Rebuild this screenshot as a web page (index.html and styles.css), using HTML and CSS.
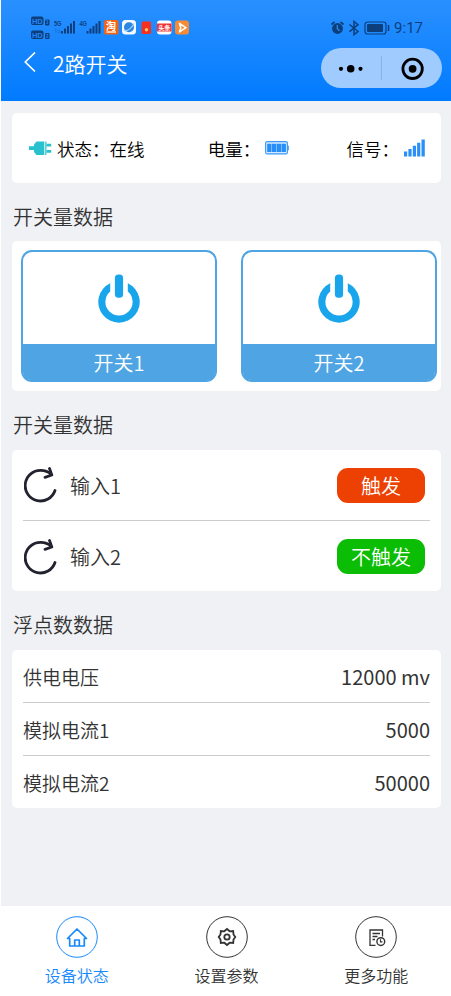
FILE: index.html
```html
<!DOCTYPE html>
<html lang="zh-CN">
<head>
    <meta charset="UTF-8">
    <meta name="viewport" content="width=device-width, initial-scale=1.0">
    <title>2路开关</title>
    <link rel="stylesheet" href="styles.css">
</head>
<body>

<div class="page">
    <header class="header">
        <div class="status-bar">
            <svg class="status-left" width="160" height="26" viewBox="0 0 160 26">
                <!-- HD badges -->
                <g fill="#0c3f7c">
                    <rect x="1" y="1.500" width="12.5" height="8.5" rx="2"/>
                    <rect x="1" y="15.500" width="12.5" height="8.5" rx="2"/>
                    <rect x="15" y="4.500" width="4.5" height="6" rx="1"/>
                    <rect x="15" y="18" width="4.5" height="6" rx="1"/>
                </g>
                <g class="hd-text">
                    <text x="1.900" y="8.600">HD</text>
                    <text x="1.900" y="22.600">HD</text>
                </g>
                <g class="sim-text">
                    <text x="15.8" y="9.400">1</text>
                    <text x="15.8" y="23">2</text>
                </g>
                <g class="net-text">
                    <text x="24" y="11" textLength="7.500" lengthAdjust="spacingAndGlyphs">5G</text>
                    <text x="49.5" y="11" textLength="7.500" lengthAdjust="spacingAndGlyphs">4G</text>
                </g>
                <path d="M26 14v4m-1.300-3l1.300-1.200M29 14v4m0 0l1.300-1.200" stroke="#1766bd" stroke-width=".7" fill="none"/>
                <g fill="#0c3f7c">
                    <rect x="31" y="16" width="2" height="2.500"/>
                    <rect x="34" y="13.500" width="2" height="5"/>
                    <rect x="37" y="11" width="2" height="7.500"/>
                    <rect x="40" y="8.500" width="2" height="10"/>
                    <rect x="43" y="6" width="2" height="12.500"/>
                    <rect x="56.500" y="16" width="2" height="2.500"/>
                    <rect x="59.500" y="13.500" width="2" height="5"/>
                    <rect x="62.500" y="11" width="2" height="7.500"/>
                    <rect x="65.500" y="8.500" width="2" height="10"/>
                    <rect x="68.500" y="6" width="2" height="12.500"/>
                </g>
                <!-- app icons -->
                <rect x="74" y="5" width="14.500" height="14.500" rx="2" fill="#f26415"/>
                <text class="app-text" x="76" y="14.500" font-size="10">淘</text>
                <rect x="76.500" y="16" width="9.500" height="2" fill="#fbc9a8"/>
                <rect x="92" y="5" width="14" height="14.500" rx="3.500" fill="#f4faff"/>
                <circle cx="99" cy="12.200" r="5" fill="#2e86e0"/>
                <path d="M94 15.500c4 1 8-3 10-7" fill="none" stroke="#9fd0fa" stroke-width="1.200"/>
                <rect x="111.500" y="6.500" width="9.500" height="12.500" rx="1.500" fill="#f5301f"/>
                <circle cx="116.500" cy="14.700" r="1.700" fill="#ffc46b"/>
                <rect x="127" y="5.500" width="14.500" height="14" rx="3" fill="#fff"/>
                <rect x="127" y="8.500" width="14.500" height="8" fill="#ee3437"/>
                <text class="app-text" x="128.200" y="14.900" font-size="6.200">头条</text>
                <rect x="145" y="5.500" width="14" height="14" rx="3" fill="#f78b35"/>
                <path d="M149.500 8.500l6.500 4.200-6.500 4.200 1.300-4.200z" fill="none" stroke="#fff" stroke-width="1.500" stroke-linejoin="round"/>
            </svg>
            <div class="status-right">
                <svg width="60" height="16" viewBox="0 0 60 16">
                    <circle cx="7.500" cy="8.500" r="5.400" fill="#0c3f7c"/>
                    <path d="M1.500 4.500l3-2.500M13.500 4.500l-3-2.500" stroke="#0c3f7c" stroke-width="1.700"/>
                    <path d="M7.300 5v3.700l2.200 2" fill="none" stroke="#2b8cfa" stroke-width="1.200"/>
                    <path d="M19.500 4.500l8.500 7-4 3.200v-13.200l4 3.200-8.500 7" fill="none" stroke="#0c3f7c" stroke-width="1.500"/>
                    <rect x="35" y="2" width="21" height="12" rx="2.500" fill="none" stroke="#0c3f7c" stroke-width="1.200"/>
                    <rect x="37" y="4" width="16" height="8" rx="1" fill="#0c3f7c"/>
                    <rect x="57.800" y="5" width="1.500" height="6" fill="#0c3f7c"/>
                </svg>
                <span class="time">9:17</span>
            </div>
        </div>
        <div class="nav-bar">
            <svg class="back" width="14" height="22" viewBox="0 0 14 22">
                <path d="M12 1.500L2.300 11l9.700 9.500" fill="none" stroke="#fff" stroke-width="1.700"/>
            </svg>
            <h1 class="nav-title">2路开关</h1>
            <div class="capsule">
                <svg width="60" height="39" viewBox="0 0 60 39">
                    <circle cx="20" cy="19.800" r="2.100"/>
                    <circle cx="29.700" cy="19.800" r="3.800"/>
                    <circle cx="39.500" cy="19.800" r="2.100"/>
                </svg>
                <span class="capsule-line"></span>
                <svg width="60" height="39" viewBox="0 0 60 39">
                    <circle cx="30.600" cy="19.800" r="9.700" fill="none" stroke="#000" stroke-width="2.800"/>
                    <circle cx="30.600" cy="19.800" r="3.900"/>
                </svg>
            </div>
        </div>
    </header>

    <main class="content">
        <div class="card info">
            <div class="info-item">
                <svg class="plug" width="23" height="16" viewBox="0 0 23 16">
                    <path d="M0 6.200H5V4.500L7.500 1.500H15.200v13.500H7.500L5 12V10H0z" fill="#2ac1cf"/>
                    <rect x="15.800" y="1.500" width="1.800" height="13.500" fill="#5fd0da"/>
                    <path d="M17.500 3.800h4.700v2.600h-4.700zM17.500 10.100h4.700v2.600h-4.700z" fill="#2ac1cf"/>
                </svg>
                <span>状态：在线</span>
            </div>
            <div class="info-item battery-item">
                <span>电量：</span>
                <svg class="battery" width="24" height="14" viewBox="0 0 24 14">
                    <rect x=".6" y=".6" width="21.800" height="12.300" rx="1.500" fill="#d4eafe" stroke="#3d98f7" stroke-width="1.100"/>
                    <path d="M2.200 2.800h4.300v8.200H2.200zM7 2.800h4.300v8.200H7zM11.800 2.800h4.300v8.200h-4.300zM16.600 2.800h4.300v8.200h-4.300z" fill="#278df9"/>
                    <rect x="22.300" y="4.500" width="1.500" height="5" rx=".7" fill="#3d98f7"/>
                </svg>
            </div>
            <div class="info-item">
                <span>信号：</span>
                <svg class="signal" width="22" height="18" viewBox="0 0 22 18">
                    <path d="M0 12.500h3.200v5H0zM4.400 10h3.200v7.500H4.400zM8.800 6.800H12v10.700H8.800zM13.100 3.800h3.200v13.700h-3.200zM17.500.5h3.300v17h-3.300z" fill="#2b8ff8"/>
                </svg>
            </div>
        </div>

        <h2 class="section-title">开关量数据</h2>
        <div class="card switches">
            <div class="switch">
                <svg class="power" width="42" height="50" viewBox="0 0 42 50">
                    <path d="M12.200 9.200A20.700 20.700 0 1 0 29.800 9.200V17.600A13.600 13.600 0 1 1 12.200 17.600z" fill="#18a5eb"/>
                    <rect x="16.900" y=".6" width="8.200" height="23.200" rx="3.600" fill="#18a5eb"/>
                </svg>
                <div class="switch-name">开关1</div>
            </div>
            <div class="switch">
                <svg class="power" width="42" height="50" viewBox="0 0 42 50">
                    <path d="M12.200 9.200A20.700 20.700 0 1 0 29.800 9.200V17.600A13.600 13.600 0 1 1 12.200 17.600z" fill="#18a5eb"/>
                    <rect x="16.900" y=".6" width="8.200" height="23.200" rx="3.600" fill="#18a5eb"/>
                </svg>
                <div class="switch-name">开关2</div>
            </div>
        </div>

        <h2 class="section-title">开关量数据</h2>
        <div class="card inputs">
            <div class="input-row">
                <svg class="reload" width="34" height="36" viewBox="0 0 34 36">
                    <path d="M27.300 7.300C24 4.400 20.500 3.400 16.800 3.400A15.300 15.300 0 1 0 31 23.500M25.500 1.500l2.300 6.500-6.800 2.300" fill="none" stroke="#23232f" stroke-width="2.800" stroke-linecap="round" stroke-linejoin="round"/>
                </svg>
                <span>输入1</span>
                <span class="badge badge-on">触发</span>
            </div>
            <div class="input-row">
                <svg class="reload" width="34" height="36" viewBox="0 0 34 36">
                    <path d="M27.300 7.300C24 4.400 20.500 3.400 16.800 3.400A15.300 15.300 0 1 0 31 23.500M25.500 1.500l2.300 6.500-6.800 2.300" fill="none" stroke="#23232f" stroke-width="2.800" stroke-linecap="round" stroke-linejoin="round"/>
                </svg>
                <span>输入2</span>
                <span class="badge badge-off">不触发</span>
            </div>
        </div>

        <h2 class="section-title">浮点数数据</h2>
        <div class="card floats">
            <div class="float-row">
                <span>供电电压</span>
                <span class="value">12000 mv</span>
            </div>
            <div class="float-row">
                <span>模拟电流1</span>
                <span class="value">5000</span>
            </div>
            <div class="float-row">
                <span>模拟电流2</span>
                <span class="value">50000</span>
            </div>
        </div>
    </main>

    <nav class="tab-bar">
        <div class="tab active">
            <svg width="42" height="42" viewBox="0 0 42 42" fill="none" stroke="currentColor">
                <circle cx="21" cy="21" r="20.300" stroke-width="1"/>
                <path d="M11.500 22.500L21 13l9.500 9.500h-2.200V30H13.700v-7.500zM18.700 30v-6h4.600v6" stroke-width="1.700" stroke-linejoin="round"/>
            </svg>
            <span>设备状态</span>
        </div>
        <div class="tab">
            <svg width="42" height="42" viewBox="0 0 42 42" fill="none" stroke="currentColor">
                <circle cx="21" cy="21" r="20.300" stroke-width="1"/>
                <path class="gear" d="M21 13l2.700 2.300 3.500-.3.300 3.500 1.800 2.500-1.800 2.500-.3 3.500-3.500-.3-2.700 2.300-2.700-2.300-3.500.3-.3-3.500-1.800-2.500 1.800-2.500.3-3.500 3.500.3z" stroke-width="1.800"/>
                <circle cx="21" cy="21" r="2.700" stroke-width="1.800"/>
            </svg>
            <span>设置参数</span>
        </div>
        <div class="tab">
            <svg width="42" height="42" viewBox="0 0 42 42" fill="none" stroke="currentColor">
                <circle cx="21" cy="21" r="20.300" stroke-width="1"/>
                <path d="M20.500 29.300h-5.500V14h12.500v6.500M17.500 17.500h7.500M17.500 20.500h5M17.500 23.500h2.500" stroke-width="1.300"/>
                <circle cx="25.800" cy="25.600" r="3.900" stroke-width="1.400"/>
                <path d="M25.500 23.300v2.600h2" stroke-width="1.100"/>
            </svg>
            <span>更多功能</span>
        </div>
    </nav>
</div>

</body>
</html>
```

FILE: styles.css
```css
* {
    box-sizing: border-box;
}
body {
    margin: 0;
    background-color: #fff;
    font-family: "Noto Sans CJK SC", sans-serif;
    font-weight: 350;
    color: #333;
}
svg {
    display: block;
    flex-shrink: 0;
}
.page {
    display: flex;
    flex-direction: column;
    height: 996px;
    margin-left: 1px;
    background-color: #eff1f5;
}

/* header */
.header {
    height: 101px;
    padding-top: 15px;
    background: linear-gradient(#2a90ff, #017bff);
}
.status-bar {
    display: flex;
    justify-content: space-between;
    height: 26px;
    padding: 0 28px 0 29px;
}
.hd-text {
    font: bold 7.5px "Liberation Sans", sans-serif;
    fill: #2485f4;
}
.sim-text {
    font: bold 5px "Liberation Sans", sans-serif;
    fill: #2485f4;
}
.net-text {
    font: bold 7px "Liberation Sans", sans-serif;
    fill: #0c3f7c;
}
.app-text {
    font-weight: bold;
    fill: #fff;
}
.status-right {
    display: flex;
    gap: 4px;
    height: 16px;
    margin-top: 5px;
    align-items: center;
}
.time {
    font: 15px Roboto, sans-serif;
    color: #0c3f7c;
}
.nav-bar {
    display: flex;
    align-items: center;
    height: 42px;
    padding: 0 9px 0 22px;
}
.nav-title {
    margin: 2px 0 0 16px;
    font-size: 21px;
    font-weight: 350;
    line-height: 30px;
    color: #fff;
}
.capsule {
    display: flex;
    align-items: center;
    width: 121px;
    height: 40px;
    margin: 12px 0 0 auto;
    border-radius: 20px;
    background-color: #a0cbff;
}
.capsule-line {
    width: 1px;
    height: 24px;
    background-color: #80b3ee;
}

/* cards */
.content {
    flex: 1;
    padding: 12px 10px 0 11px;
}
.card {
    border-radius: 5px;
    background-color: #fff;
}
.section-title {
    height: 59px;
    margin: 0;
    padding: 5px 0 0 1px;
    font-size: 20px;
    font-weight: 350;
    line-height: 58px;
}
.info + .section-title {
    height: 58px;
}
.info {
    display: flex;
    justify-content: space-between;
    align-items: center;
    height: 70px;
    padding: 0 15px 0 17px;
    font-size: 17.5px;
    color: #000;
}
.info-item {
    display: flex;
    align-items: center;
}
.battery-item {
    padding-left: 6px;
}
.plug {
    margin-right: 5px;
}
.battery, .signal {
    margin-left: 5px;
}

/* switch buttons */
.switches {
    display: flex;
    justify-content: space-between;
    height: 150px;
    padding: 9px 4px 9px 9px;
}
.switch {
    display: flex;
    flex-direction: column;
    justify-content: space-between;
    align-items: center;
    width: 196px;
    border: 2px solid #4fa5e4;
    border-radius: 11px;
}
.power {
    margin-top: 22px;
}
.switch-name {
    width: 100%;
    height: 36px;
    border-radius: 0 0 8px 8px;
    background-color: #4fa5e4;
    font-size: 20px;
    line-height: 37px;
    text-align: center;
    color: #fff;
}

/* input rows */
.inputs {
    height: 141px;
    padding: 0 11px;
}
.input-row {
    display: flex;
    align-items: center;
    height: 70px;
    padding: 0 5px 0 1px;
    font-size: 20px;
}
.input-row + .input-row {
    height: 71px;
    padding-top: 1px;
}
.input-row + .input-row, .float-row + .float-row {
    border-top: 1px solid #ccc;
}
.reload {
    margin-right: 12px;
}
.badge {
    width: 88px;
    height: 35px;
    margin-left: auto;
    border-radius: 11px;
    line-height: 36px;
    text-align: center;
    color: #fff;
}
.badge-on {
    background-color: #ed4104;
}
.badge-off {
    background-color: #0bbd04;
}

/* float rows */
.floats {
    padding: 0 11px;
}
.float-row {
    display: flex;
    justify-content: space-between;
    align-items: center;
    height: 52px;
    font-size: 19px;
}
.float-row + .float-row {
    height: 53px;
}
.value {
    font-size: 20px;
    font-weight: 400;
}

/* bottom tabs */
.tab-bar {
    display: flex;
    height: 90px;
    padding: 10px 0 0 1px;
    background-color: #fff;
}
.tab {
    display: flex;
    flex: 1;
    flex-direction: column;
    align-items: center;
    gap: 5px;
    font-size: 16px;
    line-height: 24px;
}
.tab.active {
    color: #1989fa;
}
```
